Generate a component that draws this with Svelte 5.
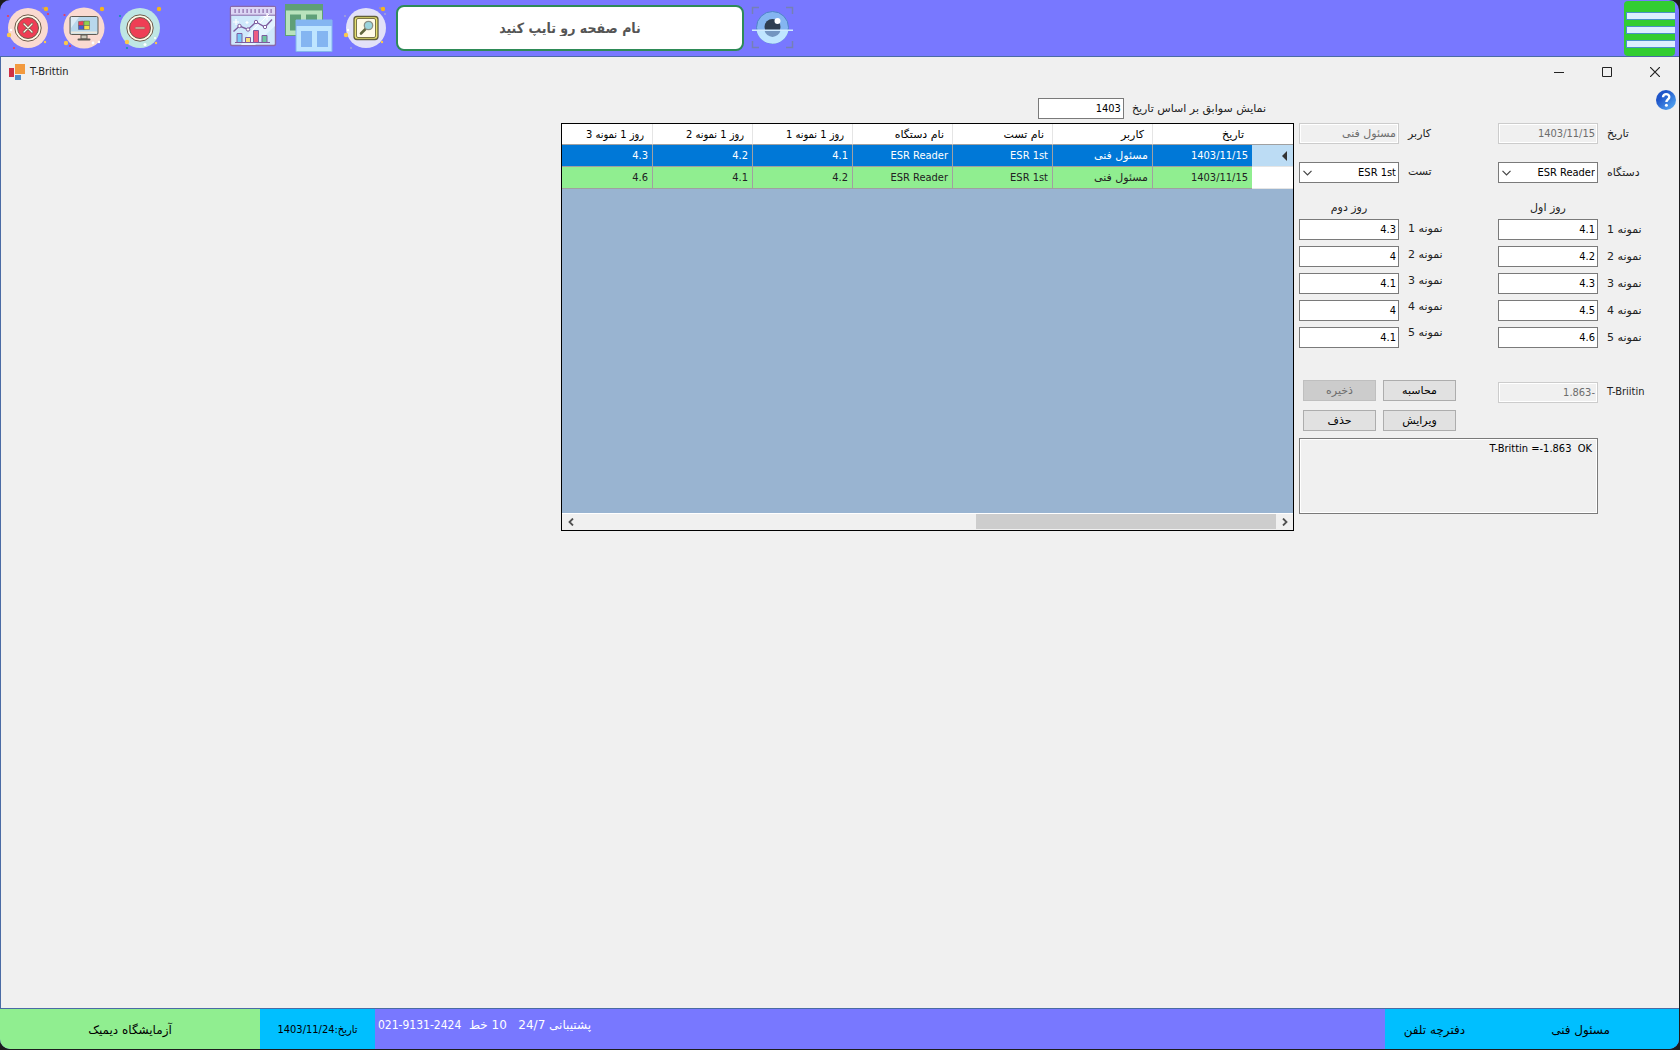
<script>
  const columns = ['تاریخ', 'کاربر', 'نام تست', 'نام دستگاه', 'روز 1 نمونه 1', 'روز 1 نمونه 2', 'روز 1 نمونه 3']

  const records = [
    ['1403/11/15', 'مسئول فنی', 'ESR 1st', 'ESR Reader', '4.1', '4.2', '4.3'],
    ['1403/11/15', 'مسئول فنی', 'ESR 1st', 'ESR Reader', '4.2', '4.1', '4.6']
  ]

  let selected = $state(0)
  let year = $state('1403')
  let page = $state('')
  let day1 = $state(['4.1', '4.2', '4.3', '4.5', '4.6'])
  let day2 = $state(['4.3', '4', '4.1', '4', '4.1'])
  let result = $state('T-Brittin =-1.863  OK')

  // plain Persian words get the wider face, numbers and Latin stay condensed
  function isPersian(text) {
    return /^[\u0600-\u06ff ]+$/.test(text)
  }
</script>

{#snippet chevron()}
  <svg class="chevron" width="9" height="6" viewBox="0 0 9 6"><path d="M.5 .8 4.5 4.8 8.5 .8" fill="none" stroke="#444" stroke-width="1.2" /></svg>
{/snippet}

{#snippet sparks(a, b)}
  <circle cx="46" cy="9" r="2.2" fill="#f5b51e" />
  <circle cx="9" cy="35" r="2.2" fill="#fbc94a" />
  <circle cx="45" cy="42" r="1.2" fill="#fbc94a" />
  <circle cx="43" cy="8" r=".7" fill="#f5b51e" />
  <circle cx="11" cy="30" r="1.2" fill="#fff" />
  <circle cx="8" cy="16" r="1.1" fill={a} />
  <circle cx="48" cy="14" r="1.1" fill={b} />
  <circle cx="14" cy="48" r="1.1" fill={a} />
{/snippet}

<div class="shell" dir="ltr">
  <header class="topbar">
    <button class="tool" aria-label="خروج">
      <svg width="56" height="56" viewBox="0 0 56 56">
        <circle cx="28" cy="28" r="20" fill="#fadad1" />
        {@render sparks('#ee3e54', '#ee3e54')}
        <circle cx="28" cy="28" r="13.2" fill="#fff9e8" stroke="#6d5a49" />
        <circle cx="28" cy="28" r="10.5" fill="#ef3e55" stroke="#6d5a49" />
        <path d="M24 24l8 8m0-8-8 8" stroke="#6d5a49" stroke-width="2.6" stroke-linecap="round" />
        <path d="M24 24l8 8m0-8-8 8" stroke="#fff9e8" stroke-width="1.3" stroke-linecap="round" />
      </svg>
    </button>
    <button class="tool" aria-label="دسکتاپ">
      <svg width="56" height="56" viewBox="0 0 56 56">
        <circle cx="28" cy="28" r="20.5" fill="#fadad1" />
        <circle cx="46" cy="9" r="2.2" fill="#f5b51e" />
        <circle cx="10" cy="43" r="2.2" fill="#fbc94a" />
        <circle cx="8.500" cy="15" r="1.100" fill="#ee3e54" />
        <circle cx="14" cy="46" r="1.100" fill="#ee3e54" />
        <circle cx="43" cy="42" r="1.200" fill="#fff" />
        <path d="M25 35h6v4h-6z" fill="#cfcabc" stroke="#5e5a52" />
        <path d="M22.5 39.5h11" stroke="#5e5a52" stroke-width="2" stroke-linecap="round" />
        <rect x="14" y="16.5" width="28" height="18" rx="1.5" fill="#b8d7ec" stroke="#5e5a52" />
        <path d="M15 32.5h26" stroke="#eee9dc" stroke-width="2" />
        <path d="M15 17l8 0-8 11z" fill="#dcebf5" />
        <path d="M22.5 21.5l5-.5v4.5h-5z" fill="#ef3e55" stroke="#5e5a52" stroke-width=".5" />
        <path d="M28 21h5.5v4.5H28z" fill="#8fd14f" stroke="#5e5a52" stroke-width=".5" />
        <path d="M22.5 25.5h5.5v4h-5.5z" fill="#4a5bd0" stroke="#5e5a52" stroke-width=".5" />
        <path d="M28 25.5h5.5v4H28z" fill="#f6e04b" stroke="#5e5a52" stroke-width=".5" />
        <circle cx="37" cy="43" r="1.4" fill="#fff" />
      </svg>
    </button>
    <button class="tool" aria-label="کوچک کردن">
      <svg width="56" height="56" viewBox="0 0 56 56">
        <circle cx="28" cy="28" r="20" fill="#bfe6e4" />
        <circle cx="47" cy="9" r="2.2" fill="#f5b51e" />
        <circle cx="15" cy="42" r="2.2" fill="#fbc94a" />
        <circle cx="44" cy="43" r="1.2" fill="#fbc94a" />
        <circle cx="8" cy="16" r="1.1" fill="#1295a5" />
        <circle cx="15" cy="48" r="1.1" fill="#1295a5" />
        <circle cx="43" cy="38" r="1" fill="#fff" />
        <circle cx="33" cy="44.5" r="1.5" fill="#fff" />
        <circle cx="28" cy="28" r="13.2" fill="#fff9e8" stroke="#6d5a49" />
        <circle cx="28" cy="28" r="10.5" fill="#ef3e55" stroke="#6d5a49" />
        <rect x="23" y="27" width="10" height="2" rx="1" fill="#d8b9a4" stroke="#8d6a5a" stroke-width=".6" />
      </svg>
    </button>
    <div class="tools">
      <button class="tool" aria-label="گزارش">
        <svg width="56" height="56" viewBox="0 0 56 56">
          <rect x="5.5" y="6.5" width="45" height="39" rx="1.5" fill="#cfe8fb" stroke="#8a6aa8" stroke-width="1.4" />
          <path d="M6 7h44v8H6z" fill="#dcd6f5" />
          <path d="M6 15.2h44" stroke="#8a6aa8" />
          <path d="M9.5 11h38" stroke="#8a6aa8" stroke-width="4" stroke-dasharray="1.2 2.8" />
          <path d="M36 16h14v10L30 45H16z" fill="#e3f3ff" />
          <path d="M44 14 27 31" stroke="#fff" />
          <path d="M11 19v6M8 22h6M22 21v3M20.5 22.5h3M42 13v7M38.5 16.5h7" stroke="#fff" stroke-width="1.2" />
          <path d="M8.5 31.5 14.5 26l8.5 3.5 8-7.5 9 5 7-7.5" fill="none" stroke="#7e5c9f" stroke-width="1.4" />
          <g fill="#fff" stroke="#7e5c9f">
            <circle cx="14.5" cy="26" r="1.7" /><circle cx="23" cy="29.5" r="1.7" /><circle cx="31" cy="22" r="1.7" /><circle cx="40" cy="27" r="1.7" />
          </g>
          <g stroke="#7e5c9f">
            <path d="M12 33.5h5v9h-5z" fill="#79c9f5" /><path d="M20.5 37.5h5v5h-5z" fill="#fbdf77" />
            <path d="M28.5 30.5h5v12h-5z" fill="#ee5c83" /><path d="M37 35.5h5v7h-5z" fill="#6fc7a2" />
            <path d="M10 42.5h35" />
          </g>
        </svg>
      </button>
      <button class="tool" aria-label="پنجره ها">
        <svg width="56" height="56" viewBox="0 0 56 56">
          <path d="M4 4h38v32H4z" fill="#5f9f78" />
          <path d="M5 10.5h36V35H5z" fill="#b9e2bd" />
          <path d="M9 14.5h11v16H9zM25 14.5h11v16H25z" fill="#5f9f78" />
          <path d="M15 20h36v31.5H15z" fill="#bfe5ff" stroke="#83b5ee" />
          <path d="M15 20h36v6H15z" fill="#84b5f1" />
          <path d="M20 31h11v16H20zM36 31h11v16H36z" fill="#84b5f1" />
        </svg>
      </button>
      <button class="tool" aria-label="جستجو">
        <svg width="56" height="56" viewBox="0 0 56 56">
          <circle cx="29" cy="28" r="20" fill="#e2e1f8" />
          {@render sparks('#a3a1d6', '#a3a1d6')}
          <rect x="17" y="16.5" width="24" height="23" rx="3" fill="#e6e06f" stroke="#625f3b" stroke-width="1.3" />
          <rect x="19.5" y="18.5" width="19" height="19" rx="1.5" fill="#fffbe8" stroke="#7b7646" />
          <path d="M28.5 29 24 33.5" stroke="#62683f" stroke-width="2.6" stroke-linecap="round" />
          <circle cx="31.5" cy="25.5" r="4.2" fill="#9cd5dd" stroke="#8a8f86" stroke-width="1.3" />
        </svg>
      </button>
    </div>
    <input class="page-search" dir="rtl" aria-label="نام صفحه" placeholder="نام صفحه رو تایپ کنید" bind:value={page} />
    <button class="tool" aria-label="نمایش">
      <svg width="56" height="56" viewBox="0 0 56 56">
        <path d="M8.5 14V7.5H15M42 7.5h6.5V14M8.5 41v6.5H15M42 47.5h6.5V41" fill="none" stroke="#7580b5" stroke-width="1.5" />
        <circle cx="28.5" cy="27.5" r="16" fill="#84b5f1" stroke="#4f83c8" />
        <path d="M12.5 30a16.2 16.2 0 0 0 32 0z" fill="#bfe5ff" />
        <circle cx="28.5" cy="27" r="8" fill="#2f3e52" />
        <path d="M20.5 30.5a8.2 8.2 0 0 0 16 0z" fill="#7395c0" />
        <circle cx="33.5" cy="21" r="3" fill="#fff" />
        <path d="M8 30.3h41" stroke="#cfeaff" stroke-width="1.4" />
      </svg>
    </button>
    <button class="menu" aria-label="منو"><i></i><i></i><i></i></button>
  </header>

  <main class="window">
    <div class="titlebar">
      <svg width="16" height="16" viewBox="0 0 16 16">
        <path d="M0 4h5v9H0z" fill="#cf3045" /><path d="M6 0h10v10H6z" fill="#f29a3f" /><path d="M6 11h6v5H6z" fill="#4e8ccb" />
      </svg>
      <h1>T-Brittin</h1>
      <button aria-label="Minimize"><svg width="10" height="10"><path d="M0 5.5h10" stroke="#222" /></svg></button>
      <button aria-label="Maximize"><svg width="10" height="10"><path d="M.5 .5h9v9h-9z" fill="none" stroke="#222" /></svg></button>
      <button aria-label="Close"><svg width="10" height="10"><path d="M0 0l10 10m0-10L0 10" stroke="#222" stroke-width="1.2" /></svg></button>
    </div>

    <div class="help-row">
      <button class="help" aria-label="راهنما">
        <svg width="20" height="20" viewBox="0 0 20 20">
          <defs>
            <linearGradient id="ball" x1="0" y1="0" x2="1" y2="1"><stop offset=".3" stop-color="#1f55c9" /><stop offset="1" stop-color="#5cb4fa" /></linearGradient>
          </defs>
          <circle cx="10" cy="10" r="10" fill="url(#ball)" />
          <path d="M7 7.2C7 3 13.3 3.2 13.3 7c0 2.3-2.9 2.6-2.9 5" fill="none" stroke="#fff" stroke-width="2.4" />
          <circle cx="10.4" cy="15.2" r="1.5" fill="#fff" />
        </svg>
      </button>
    </div>

    <div class="content" dir="rtl">
      <form class="editor" dir="ltr" onsubmit={(e) => e.preventDefault()}>
        <div class="days">
          <div class="day second">
            <div class="inputs">
              <input id="user" class="fa" dir="rtl" value="مسئول فنی" disabled />
              <div class="pick">
                <select id="test" dir="rtl"><option>ESR 1st</option></select>
                {@render chevron()}
              </div>
              <h2 class="fa" dir="rtl">روز دوم</h2>
              {#each day2 as _, i}
                <input id="second-{i}" dir="rtl" bind:value={day2[i]} />
              {/each}
            </div>
            <div class="labels fa" dir="rtl">
              <label for="user">کاربر</label>
              <label for="test" class="gap">تست</label>
              {#each day2 as _, i}
                <label for="second-{i}">نمونه {i + 1}</label>
              {/each}
            </div>
          </div>
          <div class="day first">
            <div class="inputs">
              <input id="date" dir="rtl" value="1403/11/15" disabled />
              <div class="pick">
                <select id="device" dir="rtl"><option>ESR Reader</option></select>
                {@render chevron()}
              </div>
              <h2 class="fa" dir="rtl">روز اول</h2>
              {#each day1 as _, i}
                <input id="first-{i}" dir="rtl" bind:value={day1[i]} />
              {/each}
            </div>
            <div class="labels fa" dir="rtl">
              <label for="date">تاریخ</label>
              <label for="device" class="gap">دستگاه</label>
              {#each day1 as _, i}
                <label for="first-{i}">نمونه {i + 1}</label>
              {/each}
            </div>
          </div>
        </div>

        <div class="outcome">
          <div class="actions">
            <button class="fa" disabled>ذخیره</button>
            <button class="fa">محاسبه</button>
            <button class="fa">حذف</button>
            <button class="fa">ویرایش</button>
          </div>
          <input id="brittin" dir="rtl" value="-1.863" disabled />
          <label for="brittin">T-Briitin</label>
        </div>
        <textarea dir="rtl" aria-label="نتیجه" readonly bind:value={result}></textarea>
      </form>

      <section class="history">
        <div class="filter">
          <label class="fa" for="year">نمایش سوابق بر اساس تاریخ</label>
          <input id="year" bind:value={year} />
        </div>
        <div class="grid">
          <table>
            <thead>
              <tr>
                <th class="mark"></th>
                {#each columns as column}
                  <th class:fa={isPersian(column)}>{column}</th>
                {/each}
              </tr>
            </thead>
            <tbody>
              {#each records as record, i}
                <tr class:selected={i === selected} onclick={() => (selected = i)}>
                  <td class="mark">
                    {#if i === selected}
                      <svg width="5" height="10" viewBox="0 0 5 10"><path d="M5 0v10L0 5z" fill="#333" /></svg>
                    {/if}
                  </td>
                  {#each record as value}
                    <td class:fa={isPersian(value)}>{value}</td>
                  {/each}
                </tr>
              {/each}
            </tbody>
          </table>
          <div class="scroll" dir="ltr">
            <button aria-label="چپ"><svg width="6" height="8" viewBox="0 0 6 8"><path d="M5 .5 1.5 4 5 7.5" fill="none" stroke="#505050" stroke-width="1.8" /></svg></button>
            <div class="track"><div class="thumb"></div></div>
            <button aria-label="راست"><svg width="6" height="8" viewBox="0 0 6 8"><path d="M1 .5 4.5 4 1 7.5" fill="none" stroke="#505050" stroke-width="1.8" /></svg></button>
          </div>
        </div>
      </section>
    </div>
  </main>

  <footer class="status">
    <div class="lab fa" dir="rtl">آزمایشگاه دیمیک</div>
    <div class="today" dir="rtl">تاریخ:1403/11/24</div>
    <div class="support"><span class="fa" dir="rtl">پشتیبانی 24/7 &nbsp; 10 خط &nbsp;<bdi>021-9131-2424</bdi></span></div>
    <div class="links fa" dir="rtl">
      <a href="#user">مسئول فنی</a>
      <a href="#phones">دفترچه تلفن</a>
    </div>
  </footer>
</div>

<style>
  :global(body) {
    background: #1c1c1e;
  }

  .shell {
    display: flex;
    flex-direction: column;
    box-sizing: border-box;
    min-height: 100vh;
    border: solid #1c1c1e;
    border-width: 0 1px 1px 0;
    font: 11px/14px "DejaVu Sans Condensed", "DejaVu Sans", sans-serif;
    color: #222;
  }

  button, input, select, textarea {
    box-sizing: border-box;
    margin: 0;
    font: inherit;
    color: #000;
    border-radius: 0;
    outline: none;
  }

  .fa {
    font-family: "DejaVu Sans", sans-serif;
  }

  svg {
    display: block;
  }

  /* top bar */
  .topbar {
    display: flex;
    align-items: center;
    height: 56px;
    padding-right: 4px;
    background: #7878ff;
    border-radius: 10px 10px 0 0;
  }
  .tool {
    padding: 0;
    border: 0;
    background: none;
  }
  .tools {
    display: flex;
    margin-left: 57px;
  }
  .page-search {
    width: 348px;
    height: 46px;
    margin-left: 3px;
    border: 2px solid #2e8b57;
    border-radius: 8px;
    background: #fff;
    text-align: center;
    font-size: 14px;
    font-weight: bold;
  }
  .page-search::placeholder {
    color: #555;
    opacity: 1;
  }
  .menu {
    display: flex;
    flex-direction: column;
    justify-content: center;
    align-items: flex-end;
    gap: 6px;
    width: 51px;
    height: 55px;
    margin-left: auto;
    padding: 3px 0 0;
    border: 0;
    border-radius: 4px;
    background: #32cd32;
  }
  .menu i {
    box-sizing: border-box;
    width: 49px;
    height: 8px;
    border: 1px solid #4a90c8;
    border-right: 0;
    background: #dcefff;
  }

  /* form window */
  .window {
    flex: 1;
    border: solid #4a6ba5;
    border-width: 1px 0 1px 1px;
    background: #f0f0f0;
  }
  .titlebar {
    display: flex;
    align-items: center;
    height: 30px;
    padding-left: 8px;
  }
  .titlebar h1 {
    margin: 0 auto 0 5px;
    font-size: 11px;
    font-weight: normal;
  }
  .titlebar button {
    display: flex;
    justify-content: center;
    width: 48px;
    padding: 0;
    border: 0;
    background: none;
  }
  .help-row {
    display: flex;
    justify-content: flex-end;
    height: 8px;
    padding: 3px 3px 0 0;
  }
  .help {
    width: 20px;
    height: 20px;
    padding: 0;
    border: 0;
    background: none;
  }
  .content {
    display: flex;
    align-items: flex-start;
    gap: 5px;
    padding-right: 20px;
  }

  .editor {
    flex: none;
    width: 360px;
    padding-top: 25px;
  }
  .days, .day {
    display: flex;
  }
  .inputs {
    display: flex;
    flex-direction: column;
    gap: 6px;
    width: 100px;
  }
  .inputs input, .outcome input, .filter input, select {
    width: 100%;
    height: 21px;
    padding: 0 2px;
    border: 1px solid #7a7a7a;
    background: #fff;
  }
  .inputs input:disabled, .outcome input:disabled {
    border-color: #ccc;
    background: #f0f0f0;
    box-shadow: inset 0 0 0 1px #fff;
    color: #6d6d6d;
  }
  .pick {
    position: relative;
    margin-top: 12px;
  }
  select {
    appearance: none;
    display: block;
  }
  .chevron {
    position: absolute;
    left: 4px;
    top: 8px;
    pointer-events: none;
  }
  .inputs h2 {
    margin: 12px 0 -2px;
    font-size: 11px;
    font-weight: normal;
    text-align: center;
  }
  .labels {
    display: flex;
    flex-direction: column;
    gap: 12px;
    width: 90px;
    padding-top: 4px;
    margin-left: 9px;
    text-align: left;
  }
  .labels .gap {
    margin: 12px 0 31px;
  }
  .first .labels {
    gap: 13px;
    width: 40px;
  }
  .first .labels .gap {
    margin-bottom: 30px;
  }

  .outcome {
    display: flex;
    margin-top: 32px;
  }
  .outcome input {
    width: 100px;
    margin: 2px 9px 0 42px;
  }
  .outcome label {
    padding-top: 5px;
  }
  .actions {
    display: grid;
    grid-template-columns: 73px 73px;
    gap: 9px 7px;
    margin-left: 4px;
  }
  .actions button {
    height: 21px;
    padding: 0;
    border: 1px solid #adadad;
    background: #e1e1e1;
  }
  .actions button:disabled {
    border-color: #bfbfbf;
    background: #ccc;
    color: #6d6d6d;
  }
  textarea {
    display: block;
    width: 299px;
    height: 76px;
    margin-top: 7px;
    padding: 3px 5px;
    border: 1px solid #7a7a7a;
    background: #f0f0f0;
    box-shadow: inset 0 0 0 1px #fff;
    resize: none;
  }

  .history {
    flex: 0 1 733px;
    min-width: 0;
  }
  .filter {
    display: flex;
    align-items: center;
    gap: 8px;
    padding-right: 28px;
    margin-bottom: 4px;
  }
  .filter input {
    width: 86px;
  }
  .grid {
    display: flex;
    flex-direction: column;
    height: 406px;
    border: 1px solid #000;
    background: #99b4d1;
    overflow: hidden;
  }
  table {
    width: 100%;
    table-layout: fixed;
    border-collapse: separate;
    border-spacing: 0;
  }
  th, td {
    box-sizing: border-box;
    width: 100px;
    height: 22px;
    padding: 1px 4px 0;
    border-left: 1px solid #a0a0a0;
    border-bottom: 1px solid #a0a0a0;
    text-align: right;
    white-space: nowrap;
    font-weight: normal;
  }
  th {
    height: 21px;
    padding: 2px 8px 0 0;
    border-left-color: #e5e5e5;
    background: #fff;
    color: #000;
  }
  th:last-child, td:last-child {
    width: 90px;
    border-left: 0;
  }
  td {
    background: #90ee90;
  }
  .selected td {
    background: #0078d7;
    color: #fff;
  }
  .mark {
    width: 41px;
    border-left: 0;
    background: #fff;
  }
  td.mark {
    border-color: #e5e5e5;
    padding-right: 6px;
  }
  .selected .mark {
    background: #bcdcf4;
  }
  .scroll {
    display: flex;
    height: 17px;
    margin-top: auto;
    border-top: 1px solid #fff;
    box-sizing: border-box;
    background: #f0f0f0;
  }
  .scroll button {
    display: flex;
    align-items: center;
    justify-content: center;
    width: 17px;
    padding: 0;
    border: 0;
    background: none;
  }
  .track {
    display: flex;
    justify-content: flex-end;
    flex: 1;
  }
  .thumb {
    width: 43%;
    height: 15px;
    background: #cdcdcd;
  }

  /* status bar */
  .status {
    display: flex;
    height: 40px;
    background: #7878ff;
    border-radius: 0 0 10px 10px;
    overflow: hidden;
    color: #000;
  }
  .status div {
    display: flex;
    align-items: center;
    box-sizing: border-box;
    padding-top: 2px;
  }
  .status .lab {
    justify-content: center;
    width: 260px;
    background: #90ee90;
    font-size: 12px;
  }
  .status .today {
    justify-content: center;
    width: 115px;
    background: #00bfff;
  }
  .status .support {
    flex: 1;
    align-items: flex-start;
    padding: 9px 3px;
    color: #fff;
    font-size: 12px;
  }
  .support bdi {
    font-family: "DejaVu Sans Condensed", "DejaVu Sans", sans-serif;
  }
  .status .links {
    gap: 86px;
    width: 294px;
    padding-right: 69px;
    background: #00bfff;
    font-size: 12px;
  }
  .links a {
    color: inherit;
    text-decoration: none;
    white-space: nowrap;
  }
</style>
